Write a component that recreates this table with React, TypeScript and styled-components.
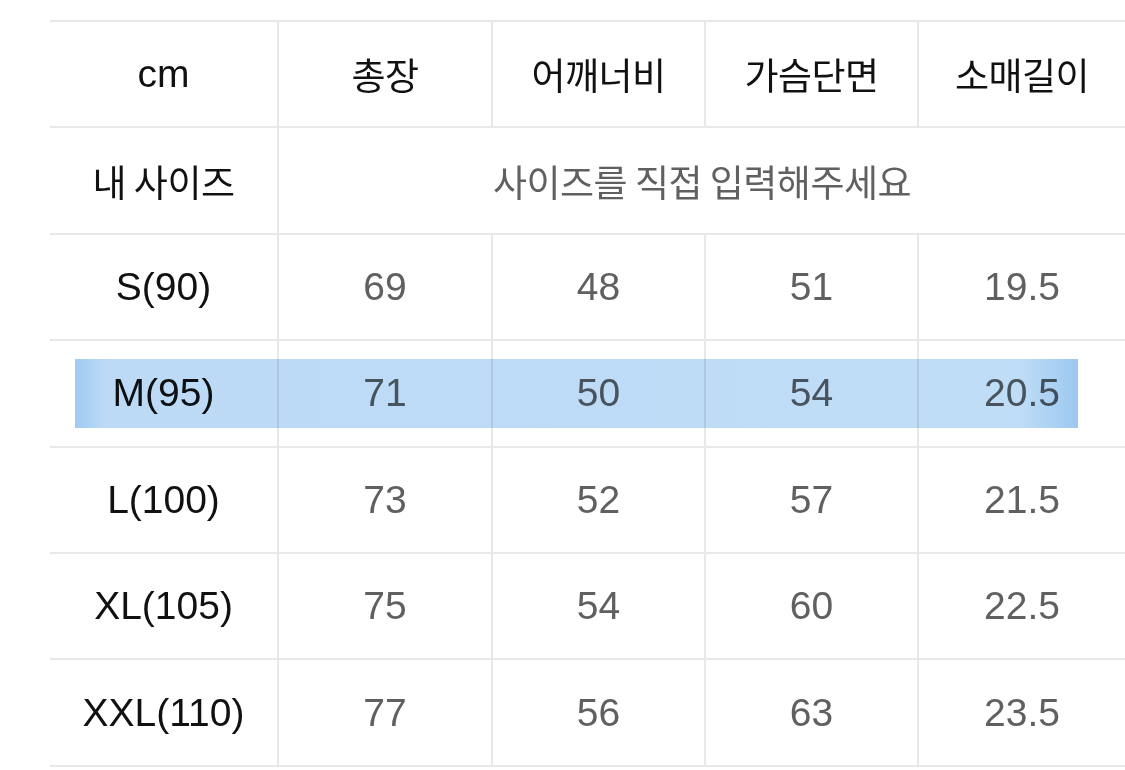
import styled, { createGlobalStyle } from "styled-components";

const GlobalStyle = createGlobalStyle`
  html, body {
    margin: 0;
    padding: 0;
    background: #ffffff;
    overflow: hidden;
  }
  body {
    font-family: "Liberation Sans", "Noto Sans CJK KR", sans-serif;
  }
`;

const Page = styled.div`
  width: 1125px;
  height: 770px;
  padding: 20px 0 0 50px;
  box-sizing: border-box;
`;

const Table = styled.div`
  width: 1075px;
  border-top: 2px solid #e8e8e8;
`;

const Row = styled.div`
  position: relative;
  display: grid;
  grid-template-columns: 227px 214px 213px 213px 208px;
  height: 106.4px;
  box-sizing: border-box;
  border-bottom: 2px solid #e8e8e8;
`;

const Cell = styled.div<{ $muted?: boolean; $span?: number }>`
  display: flex;
  align-items: center;
  justify-content: center;
  grid-column: span ${(p) => p.$span ?? 1};
  font-size: 39px;
  color: ${(p) => (p.$muted ? "#606060" : "#111111")};
  & + & {
    border-left: 2px solid #e8e8e8;
  }
`;

const Ko = styled.span`
  font-family: "Noto Sans CJK KR", sans-serif;
  font-size: 37px;
  font-weight: 400;
  letter-spacing: -0.5px;
`;

const Highlight = styled.div`
  position: absolute;
  left: 25px;
  right: 47px;
  top: 18px;
  height: 69px;
  pointer-events: none;
  mix-blend-mode: multiply;
  background: linear-gradient(
    to right,
    #9fcaf2 0px,
    #bcdaf6 30px,
    #c0ddf7 calc(100% - 60px),
    #9cc8f1 100%
  );
`;

const headers = ["총장", "어깨너비", "가슴단면", "소매길이"];

const sizes: { label: string; values: string[] }[] = [
  { label: "S(90)", values: ["69", "48", "51", "19.5"] },
  { label: "M(95)", values: ["71", "50", "54", "20.5"] },
  { label: "L(100)", values: ["73", "52", "57", "21.5"] },
  { label: "XL(105)", values: ["75", "54", "60", "22.5"] },
  { label: "XXL(110)", values: ["77", "56", "63", "23.5"] },
];

export default function App() {
  return (
    <Page>
      <GlobalStyle />
      <Table>
        <Row>
          <Cell>cm</Cell>
          {headers.map((h) => (
            <Cell key={h}>
              <Ko>{h}</Ko>
            </Cell>
          ))}
        </Row>
        <Row>
          <Cell>
            <Ko>내 사이즈</Ko>
          </Cell>
          <Cell $muted $span={4}>
            <Ko>사이즈를 직접 입력해주세요</Ko>
          </Cell>
        </Row>
        {sizes.map((s) => (
          <Row key={s.label}>
            <Cell>{s.label}</Cell>
            {s.values.map((v, i) => (
              <Cell key={i} $muted>
                {v}
              </Cell>
            ))}
            {s.label === "M(95)" && <Highlight />}
          </Row>
        ))}
      </Table>
    </Page>
  );
}
